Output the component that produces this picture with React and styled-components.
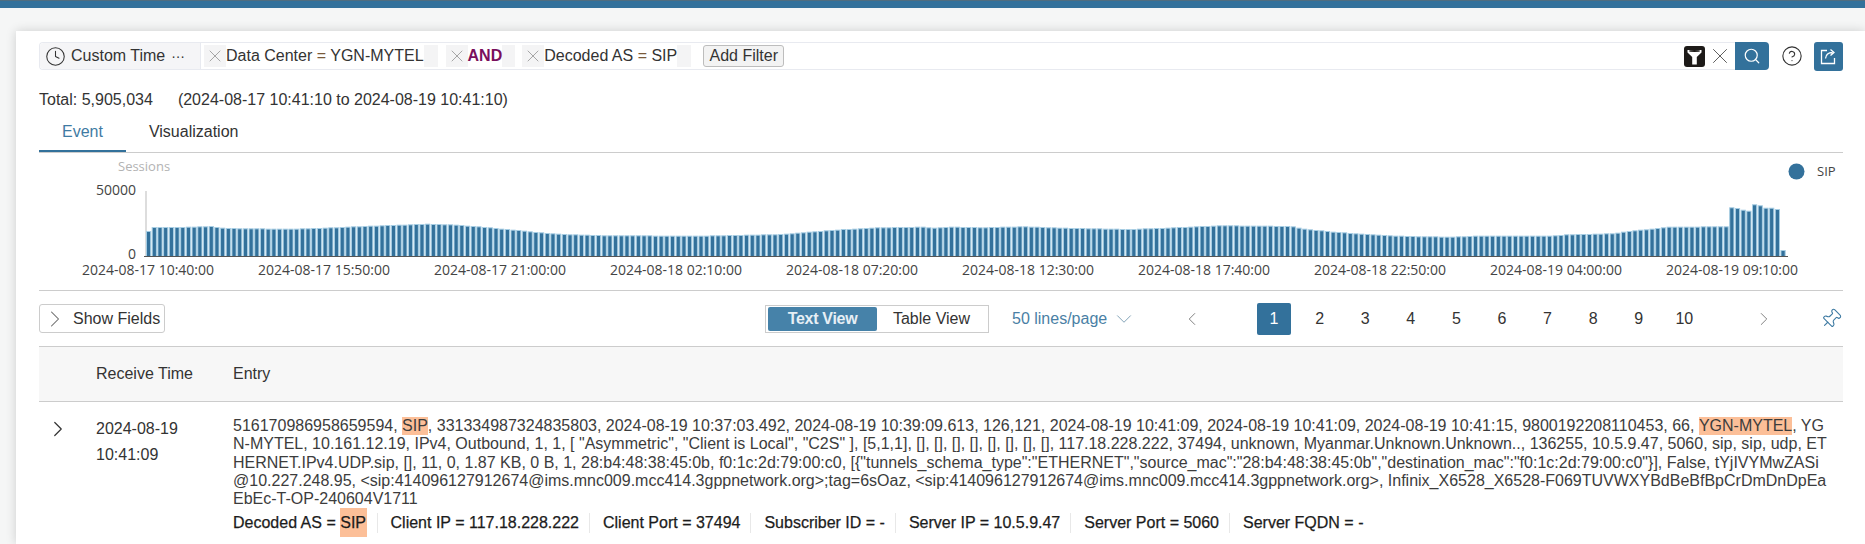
import React from 'react';
import styled, { createGlobalStyle } from 'styled-components';
import { Clock, X, Search, CircleHelp, ChevronRight, ChevronLeft, ChevronDown, Pin } from 'lucide-react';

const Global = createGlobalStyle`
  html, body { margin: 0; padding: 0; background: #f5f6f6; }
  body { font-family: "Liberation Sans", Arial, sans-serif; font-size: 16px; color: #333; }
  * { box-sizing: border-box; }
  svg { flex-shrink: 0; display: block; }
`;

const Page = styled.div`
  height: 544px;
  overflow: hidden;
  background: #f5f6f6;
`;
const TopBar = styled.div`
  height: 8px;
  background: #33719b;
  border-top: 1px solid #4f6d80;
`;
const Card = styled.main`
  margin: 23px 0 0 16px;
  padding: 11px 22px 0 23px;
  height: 513px;
  background: #fff;
  box-shadow: 0 0 10px rgba(0, 0, 0, 0.16);
`;
const FilterRow = styled.div`
  display: flex;
  align-items: center;
  height: 28px;
`;
const FilterBar = styled.div`
  flex: 1;
  display: flex;
  align-items: center;
  height: 28px;
  border: 1px solid #e8eaf0;
  border-right: 0;
  border-radius: 4px 0 0 4px;
`;
const TimeBox = styled.div`
  display: flex;
  align-items: center;
  width: 161px;
  height: 26px;
  margin-right: 3px;
  padding-left: 5px;
  gap: 5px;
  background: #f5f5f7;
  border-right: 1px solid #e8eaf0;
  border-radius: 4px 0 0 4px;
  white-space: nowrap;
`;
const Dots = styled.span`
  margin-left: 1px;
  font-size: 14px;
  letter-spacing: -0.2px;
`;
const Chip = styled.div`
  display: flex;
  align-items: stretch;
  height: 22px;
  margin-right: ${p => p.$gap}px;
  background: #f4f4f5;
  white-space: nowrap;
`;
const ChipClose = styled.span`
  display: flex;
  align-items: center;
  justify-content: center;
  width: 22px;
  color: #8a8a8a;
`;
const ChipText = styled.span`
  display: block;
  padding-right: ${p => p.$pad}px;
  line-height: 22px;
  background: linear-gradient(to right, #fff calc(100% - ${p => p.$pad}px), transparent 0);
`;
const Eq = styled.span`
  color: #7a5a3a;
`;
const AndText = styled.span`
  color: #7a0f5d;
  font-weight: 700;
`;
const AddFilter = styled.button`
  height: 22px;
  width: 81px;
  margin-left: 12px;
  padding: 0;
  font: 16px "Liberation Sans", Arial, sans-serif;
  color: #333;
  background: #f3f3f3;
  border: 1px solid #bdbdbd;
  border-radius: 3px;
`;
const BarEnd = styled.div`
  margin-left: auto;
  display: flex;
  align-items: center;
  gap: 2px;
  margin-right: 2px;
`;
const FunnelBox = styled.svg`
  width: 21px;
  height: 21px;
`;
const SearchBtn = styled.button`
  width: 34px;
  height: 28px;
  padding: 0;
  display: flex;
  align-items: center;
  justify-content: center;
  background: #33719b;
  border: 0;
  border-radius: 0 4px 4px 0;
  color: #fff;
`;
const HelpSlot = styled.div`
  margin: 0 11px 0 12px;
  display: flex;
  color: #333;
`;
const ShareBtn = styled.button`
  width: 29px;
  height: 29px;
  padding: 0;
  display: flex;
  align-items: center;
  justify-content: center;
  background: #33719b;
  border: 0;
  border-radius: 3px;
`;
const Total = styled.div`
  margin-top: 20px;
  height: 20px;
  line-height: 20px;
  display: flex;
  gap: 25px;
  white-space: nowrap;
`;
const Tabs = styled.div`
  display: flex;
  height: 43px;
  border-bottom: 1px solid #ccc;
`;
const Tab = styled.div`
  height: 42px;
  padding: 12px 23px 0;
  line-height: 20px;
  color: ${p => (p.$active ? '#3f7ba3' : '#333')};
  border-bottom: 2px solid ${p => (p.$active ? '#33719b' : 'transparent')};
`;
const ChartWrap = styled.section`
  height: 138px;
  border-bottom: 1px solid #ccc;
`;
const ChartSvg = styled.svg`
  width: 1804px;
  height: 137px;
  text {
    font-family: "Open Sans", sans-serif;
    font-size: 14px;
    fill: #444;
  }
`;
const Toolbar = styled.div`
  position: relative;
  height: 56px;
  display: flex;
  align-items: center;
  border-bottom: 1px solid #ccc;
`;
const ShowFields = styled.button`
  width: 126px;
  height: 29px;
  padding: 0 0 0 1px;
  display: flex;
  align-items: center;
  gap: 4px;
  font: 16px "Liberation Sans", Arial, sans-serif;
  color: #333;
  background: #fff;
  border: 1px solid #ccc;
  border-radius: 3px;
`;
const Segment = styled.div`
  margin-left: 600px;
  width: 224px;
  height: 28px;
  padding: 1px 2px;
  display: flex;
  border: 1px solid #ccc;
`;
const SegItem = styled.div`
  width: 110px;
  text-align: center;
  line-height: 24px;
  border-radius: 2px;
  color: ${p => (p.$active ? '#e6eff5' : '#333')};
  background: ${p => (p.$active ? '#4682a9' : 'transparent')};
  font-weight: ${p => (p.$active ? 600 : 400)};
  letter-spacing: ${p => (p.$active ? '-0.3px' : 0)};
`;
const PerPage = styled.div`
  margin-left: 23px;
  width: 118px;
  display: flex;
  align-items: center;
  gap: 4px;
  color: #4a7fa5;
  white-space: nowrap;
`;
const PrevSlot = styled.div`
  margin-left: 58px;
  width: 8px;
  display: flex;
  justify-content: center;
  color: #777;
`;
const Pages = styled.div`
  margin-left: 61px;
  display: flex;
  gap: 11.6px;
`;
const PageNum = styled.div`
  width: 34px;
  height: 32px;
  line-height: 32px;
  text-align: center;
  border-radius: 2px;
  color: ${p => (p.$active ? '#fff' : '#333')};
  background: ${p => (p.$active ? '#33719b' : 'transparent')};
`;
const NextSlot = styled.div`
  margin-left: 59px;
  width: 8px;
  display: flex;
  justify-content: center;
  color: #777;
`;
const PinSlot = styled.div`
  margin-left: 52px;
  display: flex;
  color: #3f7ba3;
`;
const TableHead = styled.div`
  height: 55px;
  display: flex;
  align-items: center;
  background: #f7f7f7;
  border-bottom: 1px solid #ccc;
  white-space: nowrap;
`;
const HeadTime = styled.div`
  margin-left: 57px;
  width: 137px;
`;
const Row = styled.div`
  display: flex;
`;
const Expander = styled.div`
  width: 57px;
  padding: 14px 0 0 6px;
  color: #333;
`;
const TimeCell = styled.div`
  width: 137px;
  padding-top: 14px;
  line-height: 26px;
`;
const EntryCell = styled.div`
  flex: 1;
  padding-top: 15px;
`;
const Line = styled.div`
  height: 18.3px;
  line-height: 18.3px;
  white-space: nowrap;
  color: #3c3c3c;
`;
const Mark = styled.span`
  background: #fcbf98;
  display: inline-block;
`;
const Attrs = styled.div`
  display: flex;
  align-items: center;
  height: 29px;
  white-space: nowrap;
`;
const Attr = styled.div`
  display: flex;
  align-items: center;
  height: 20px;
  padding-right: 10px;
  margin-right: 13px;
  color: #1c1c1c;
  border-right: 1px solid ${p => (p.$last ? 'transparent' : '#e8e8e8')};
  -webkit-text-stroke: 0.25px #1c1c1c;
`;
const AttrMark = styled.span`
  height: 29px;
  line-height: 29px;
  margin-left: 4px;
  padding: 0 0.5px;
  background: #fcbf98;
`;

const keys = [
  [146, 25], [151, 29], [180, 29], [208, 30], [222, 28], [247, 27.6], [294, 27.3], [322, 28.3],
  [369, 30.3], [426, 32.3], [451, 31.5], [479, 29.3], [515, 26], [547, 22.7], [569, 21.7],
  [604, 20.7], [700, 20.3], [782, 22], [807, 24.3], [843, 27], [879, 28.7], [921, 29.3], [932, 28.3],
  [950, 29.3], [979, 28.7], [1021, 29.7], [1057, 28.3], [1129, 27], [1164, 28.3], [1218, 30.7],
  [1260, 30.3], [1289, 30], [1299, 27.7], [1331, 24.3], [1367, 21.7], [1403, 20], [1449, 19.3],
  [1474, 20.3], [1546, 20.3], [1567, 21.7], [1610, 22.7], [1624, 24.7], [1639, 26.3], [1667, 29.3],
  [1728, 29.7],
];
const interp = x => {
  for (let i = 1; i < keys.length; i++) {
    if (x <= keys[i][0]) {
      const [a, b] = keys[i - 1];
      const [c, d] = keys[i];
      return b + ((d - b) * (x - a)) / (c - a);
    }
  }
  return keys[keys.length - 1][1];
};
const spike = [48.7, 48, 46.3, 45.3, 51.7, 50.7, 48.3, 48.3, 47, 6];
const STEP = 5.695;
const bars = Array.from({ length: 288 }, (_, i) => {
  const x = 146 + i * STEP;
  const h = i === 0 ? 25 : i >= 278 ? spike[i - 278] : Math.round(interp(x) * 3) / 3;
  return { x, h };
});
const labels = [
  [148, '2024-08-17 10:40:00'], [324, '2024-08-17 15:50:00'], [500, '2024-08-17 21:00:00'],
  [676, '2024-08-18 02:10:00'], [852, '2024-08-18 07:20:00'], [1028, '2024-08-18 12:30:00'],
  [1204, '2024-08-18 17:40:00'], [1380, '2024-08-18 22:50:00'], [1556, '2024-08-19 04:00:00'],
  [1732, '2024-08-19 09:10:00'],
];

const Chart = () => (
  <ChartWrap>
    <ChartSvg viewBox="39 153 1804 137">
      <text x="118" y="171" style={{ fill: '#b3b3b3', fontSize: 13 }}>Sessions</text>
      <text x="136" y="195" textAnchor="end">50000</text>
      <text x="136" y="259" textAnchor="end">0</text>
      <line x1="146" y1="191" x2="146" y2="256" stroke="#bbb" />
      {bars.map(b => (
        <rect
          key={b.x}
          x={b.x + 0.5}
          y={256 - b.h + 0.5}
          width={4.2}
          height={b.h}
          fill="#33719b"
          stroke="#a6cde3"
          strokeWidth="1"
        />
      ))}
      <line x1="144" y1="256.5" x2="1788" y2="256.5" stroke="#555" />
      {labels.map(([x, t]) => (
        <text key={t} x={x} y="275" textAnchor="middle">{t}</text>
      ))}
      <circle cx="1796.5" cy="171.5" r="8" fill="#33719b" />
      <text x="1817" y="176" style={{ fontSize: 13 }}>SIP</text>
    </ChartSvg>
  </ChartWrap>
);

const attrs = [
  'Client IP = 117.18.228.222',
  'Client Port = 37494',
  'Subscriber ID = -',
  'Server IP = 10.5.9.47',
  'Server Port = 5060',
];

const ChipX = () => <X size={20} strokeWidth={0.9} />;

export default function App() {
  return (
    <Page>
      <Global />
      <TopBar />
      <Card>
        <FilterRow>
          <FilterBar>
            <TimeBox>
              <Clock size={21} strokeWidth={1.2} color="#333" />
              <span>Custom Time</span>
              <Dots>···</Dots>
            </TimeBox>
            <Chip $gap={8}>
              <ChipClose><ChipX /></ChipClose>
              <ChipText $pad={14}>Data Center <Eq>=</Eq> YGN-MYTEL</ChipText>
            </Chip>
            <Chip $gap={7}>
              <ChipClose><ChipX /></ChipClose>
              <ChipText $pad={13}><AndText>AND</AndText></ChipText>
            </Chip>
            <Chip $gap={0}>
              <ChipClose><ChipX /></ChipClose>
              <ChipText $pad={14}>Decoded AS <Eq>=</Eq> SIP</ChipText>
            </Chip>
            <AddFilter>Add Filter</AddFilter>
            <BarEnd>
              <FunnelBox viewBox="0 0 21 21">
                <rect width="21" height="21" rx="3" fill="#1d1a18" />
                <path d="M3.5 4h14v2.5l-4.7 4.6v7.4h-4.6v-7.4L3.5 6.500z" fill="#fff" />
                <ellipse cx="10.500" cy="5" rx="5.500" ry="0.900" fill="#1d1a18" />
              </FunnelBox>
              <X size={26} strokeWidth={0.8} color="#444" />
            </BarEnd>
          </FilterBar>
          <SearchBtn><Search size={18} strokeWidth={1.6} /></SearchBtn>
          <HelpSlot><CircleHelp size={22} strokeWidth={1.2} /></HelpSlot>
          <ShareBtn>
            <svg width="19" height="19" viewBox="0 0 19 19" fill="none" stroke="#fff" strokeWidth="1.300">
              <path d="M8 3.500H2.500v13h13V11" />
              <path d="M6.500 11.500c.5-4 3.200-6 7-6M11.500 2.500l3.500 3-3.500 3" />
            </svg>
          </ShareBtn>
        </FilterRow>
        <Total>
          <span>Total: 5,905,034</span>
          <span>(2024-08-17 10:41:10 to 2024-08-19 10:41:10)</span>
        </Total>
        <Tabs>
          <Tab $active>Event</Tab>
          <Tab>Visualization</Tab>
        </Tabs>
        <Chart />
        <Toolbar>
          <ShowFields>
            <ChevronRight size={28} strokeWidth={0.9} color="#666" />
            Show Fields
          </ShowFields>
          <Segment>
            <SegItem $active>Text View</SegItem>
            <SegItem>Table View</SegItem>
          </Segment>
          <PerPage>
            50 lines/page
            <ChevronDown size={26} strokeWidth={0.8} color="#6f94ad" />
          </PerPage>
          <PrevSlot><ChevronLeft size={22} strokeWidth={1} /></PrevSlot>
          <Pages>
            {[1, 2, 3, 4, 5, 6, 7, 8, 9, 10].map(n => (
              <PageNum key={n} $active={n === 1}>{n}</PageNum>
            ))}
          </Pages>
          <NextSlot><ChevronRight size={22} strokeWidth={1} /></NextSlot>
          <PinSlot><Pin size={22} strokeWidth={1.2} style={{ transform: 'rotate(45deg)' }} /></PinSlot>
        </Toolbar>
        <TableHead>
          <HeadTime>Receive Time</HeadTime>
          <div>Entry</div>
        </TableHead>
        <Row>
          <Expander><ChevronRight size={26} strokeWidth={1.1} /></Expander>
          <TimeCell>2024-08-19<br />10:41:09</TimeCell>
          <EntryCell>
            <Line>516170986958659594, <Mark>SIP</Mark>, 331334987324835803, 2024-08-19 10:37:03.492, 2024-08-19 10:39:09.613, 126,121, 2024-08-19 10:41:09, 2024-08-19 10:41:09, 2024-08-19 10:41:15, 9800192208110453, 66, <Mark>YGN-MYTEL</Mark>, YG</Line>
            <Line>N-MYTEL, 10.161.12.19, IPv4, Outbound, 1, 1, [ "Asymmetric", "Client is Local", "C2S" ], [5,1,1], [], [], [], [], [], [], [], [], 117.18.228.222, 37494, unknown, Myanmar.Unknown.Unknown.., 136255, 10.5.9.47, 5060, sip, sip, udp, ET</Line>
            <Line>HERNET.IPv4.UDP.sip, [], 11, 0, 1.87 KB, 0 B, 1, 28:b4:48:38:45:0b, f0:1c:2d:79:00:c0, [{'{'}"tunnels_schema_type":"ETHERNET","source_mac":"28:b4:48:38:45:0b","destination_mac":"f0:1c:2d:79:00:c0"{'}'}], False, tYjIVYMwZASi</Line>
            <Line>@10.227.248.95, &lt;sip:414096127912674@ims.mnc009.mcc414.3gppnetwork.org&gt;;tag=6sOaz, &lt;sip:414096127912674@ims.mnc009.mcc414.3gppnetwork.org&gt;, Infinix_X6528_X6528-F069TUVWXYBdBeBfBpCrDmDnDpEa</Line>
            <Line>EbEc-T-OP-240604V1711</Line>
            <Attrs>
              <Attr>Decoded AS =<AttrMark>SIP</AttrMark></Attr>
              {attrs.map(t => <Attr key={t}>{t}</Attr>)}
              <Attr $last>Server FQDN = -</Attr>
            </Attrs>
          </EntryCell>
        </Row>
      </Card>
    </Page>
  );
}
